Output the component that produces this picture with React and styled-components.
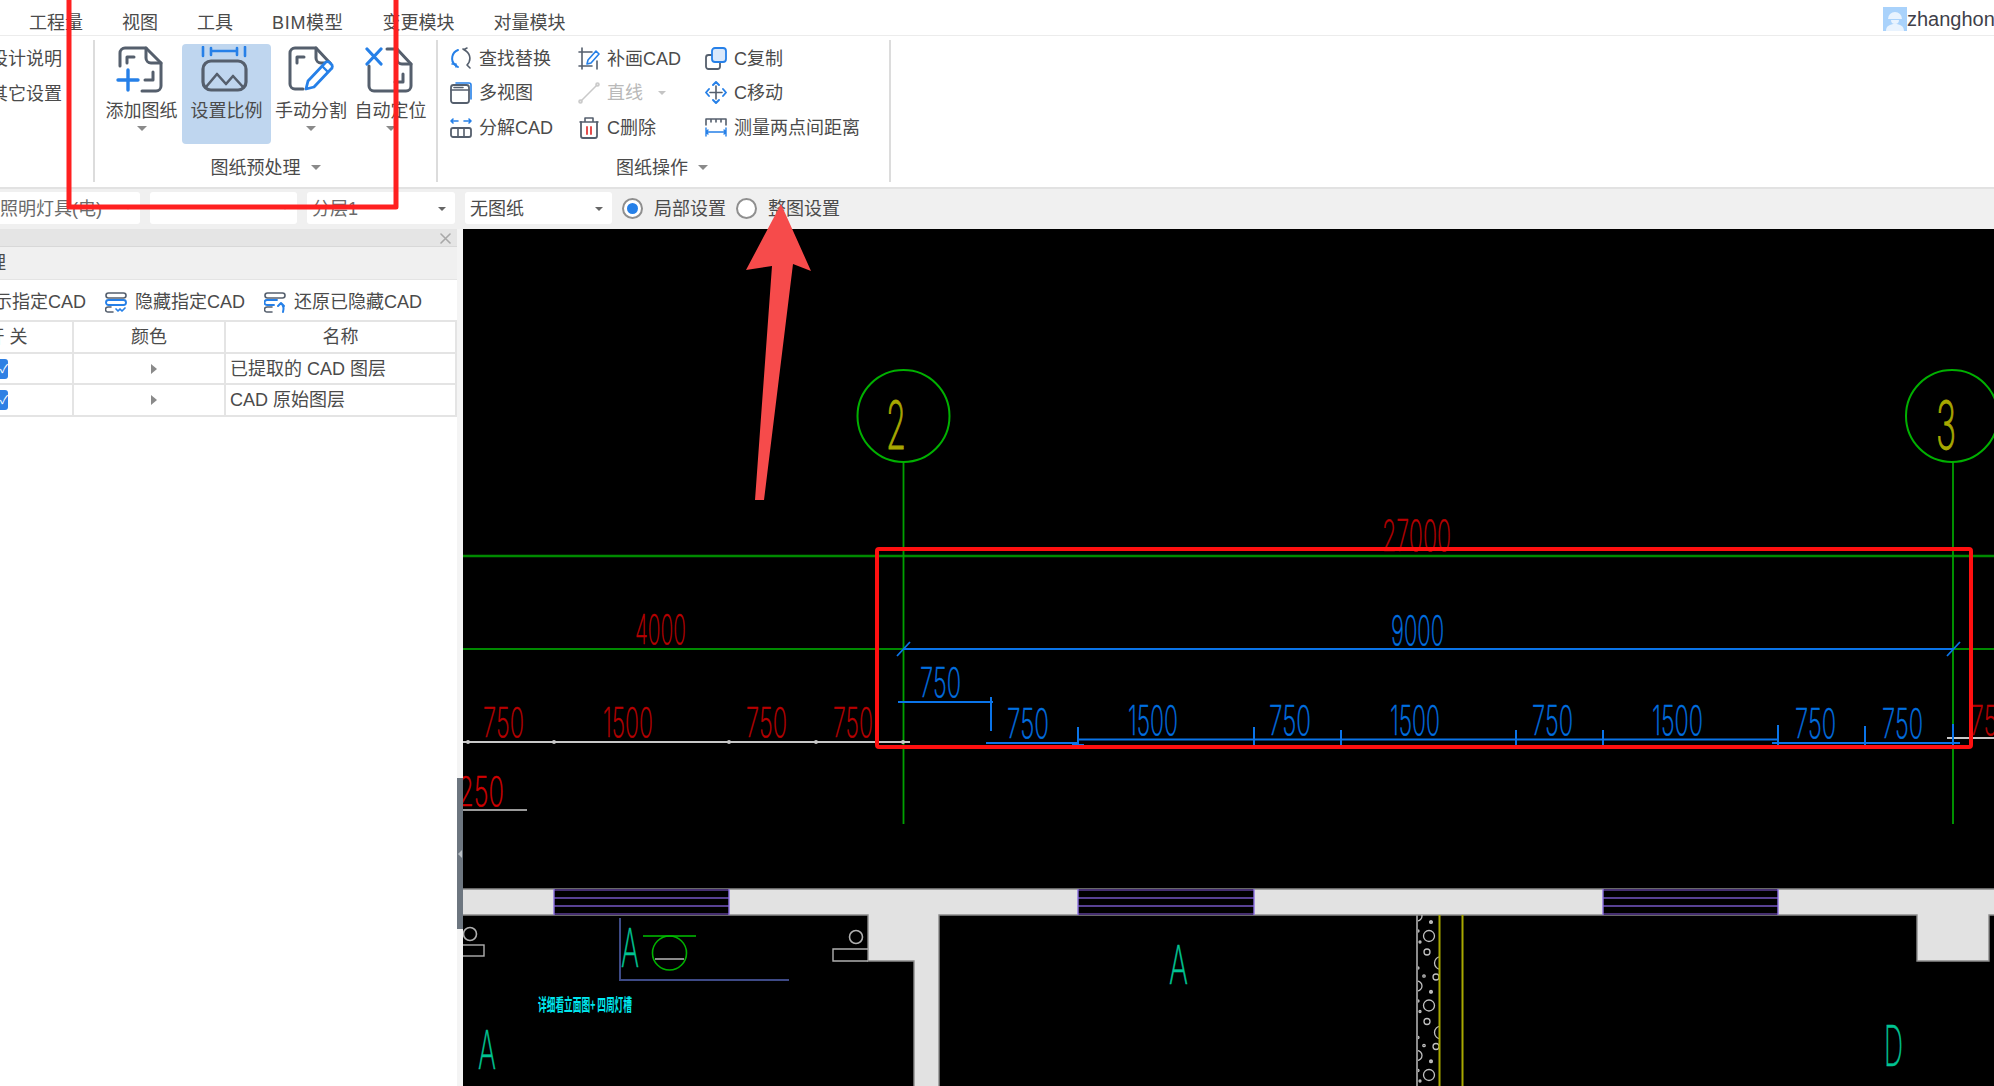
import React from "react";
import styled, { createGlobalStyle } from "styled-components";

const INK = "#555f6d";
const BLUE = "#2680e8";
const FONT = `"Liberation Sans", "Noto Sans CJK SC", sans-serif`;

const GlobalStyle = createGlobalStyle`
  html, body { margin: 0; padding: 0; background: #fff; overflow: hidden; }
  * { box-sizing: border-box; }
`;

const Page = styled.div`
  position: relative;
  width: 1994px;
  height: 1086px;
  overflow: hidden;
  display: flex;
  flex-direction: column;
  font: 18px/24px ${FONT};
  color: #4b4b4b;
  background: #fff;
`;

/* menu bar */
const MenuBar = styled.div`
  height: 36px;
  flex: none;
  display: flex;
  align-items: center;
  gap: 39px;
  padding: 10px 0 0 29px;
  border-bottom: 1px solid #ececec;
`;
const MenuItem = styled.span`
  white-space: nowrap;
  letter-spacing: ${(p) => (p.$latin ? "0.7px" : "0")};
`;
const UserBox = styled.div`
  margin-left: auto;
  display: flex;
  align-items: center;
  margin-top: -8px;
  width: 111px;
  overflow: hidden;
  font-size: 20px;
  color: #3f3f4a;
`;

/* ribbon */
const Ribbon = styled.div`
  height: 153px;
  flex: none;
  display: flex;
  align-items: stretch;
  border-bottom: 2px solid #e2e2e2;
`;
const Group = styled.div`
  width: ${(p) => p.$width}px;
  flex: none;
  margin: 4px 0 5px;
  border-right: 2px solid #dcdcdc;
  display: flex;
  flex-direction: column;
`;
const GroupBody = styled.div`
  flex: 1;
  min-height: 0;
`;
const GroupTitle = styled.div`
  height: 30px;
  flex: none;
  display: flex;
  align-items: center;
  justify-content: center;
  gap: 10px;
  padding-top: 1px;
  padding-right: ${(p) => p.$pull || 0}px;
`;
const Caret = styled.i`
  display: block;
  width: 0;
  height: 0;
  border-left: ${(p) => p.$size || 5}px solid transparent;
  border-right: ${(p) => p.$size || 5}px solid transparent;
  border-top: ${(p) => p.$size || 5}px solid ${(p) => p.$color || "#8a8a8a"};
`;
const StackedText = styled.div`
  display: flex;
  flex-direction: column;
  align-items: flex-end;
  padding: 2px 31px 0 0;
  line-height: 35px;
  white-space: nowrap;
`;
const LargeRow = styled(GroupBody)`
  display: flex;
  align-items: flex-start;
  padding: 4px 0 0 6px;
`;
const LargeButton = styled.div`
  width: ${(p) => p.$width}px;
  height: 100px;
  flex: none;
  display: flex;
  flex-direction: column;
  align-items: center;
  padding-top: 2px;
  border-radius: 4px;
  white-space: nowrap;
  background: ${(p) => (p.$active ? "#bfd6ef" : "transparent")};
`;
const LargeLabel = styled.span`
  margin: 6px 0 3px;
`;
const SmallGrid = styled(GroupBody)`
  display: grid;
  grid-template-columns: 128px 127px auto;
  grid-auto-rows: 34.5px;
  padding: 1px 0 0 12px;
`;
const SmallButton = styled.div`
  display: flex;
  align-items: center;
  gap: 7px;
  white-space: nowrap;
  color: ${(p) => (p.$disabled ? "#b9b9b9" : "inherit")};
  & > span {
    padding-top: 1px;
  }
`;
const CaretGap = styled.span`
  margin-left: 8px;
`;

/* selector bar */
const SelectBar = styled.div`
  height: 40px;
  flex: none;
  display: flex;
  align-items: center;
  gap: 10px;
  padding-bottom: 2px;
  background: #f0f0f0;
`;
const Select = styled.div`
  width: ${(p) => p.$width}px;
  height: 32px;
  flex: none;
  margin-left: ${(p) => p.$offset || 0}px;
  display: flex;
  align-items: center;
  justify-content: space-between;
  padding: 1px 9px 0 5px;
  background: #fff;
  border-radius: 3px;
  white-space: nowrap;
  color: ${(p) => (p.$muted ? "#6a6a6a" : "inherit")};
`;
const Radio = styled.span`
  width: 21px;
  height: 21px;
  flex: none;
  border-radius: 50%;
  border: 2px solid #8f8f8f;
  background: #fff;
  display: flex;
  align-items: center;
  justify-content: center;
  &::after {
    content: "";
    width: 11px;
    height: 11px;
    border-radius: 50%;
    background: ${(p) => (p.$checked ? BLUE : "transparent")};
  }
`;
const RadioLabel = styled.span`
  padding: 1px 0 0 1px;
`;

/* main area */
const Main = styled.div`
  flex: 1;
  min-height: 0;
  display: flex;
`;
const Panel = styled.div`
  width: 457px;
  flex: none;
  background: #fff;
  overflow: hidden;
`;
const PanelStrip = styled.div`
  height: 18px;
  display: flex;
  align-items: center;
  justify-content: flex-end;
  padding: 2px 6px 0 0;
  background: #e5e5e5;
  border-bottom: 1px solid #d8d8d8;
`;
const PanelHead = styled.div`
  height: 33px;
  display: flex;
  align-items: center;
  margin-left: -12px;
  background: #f0f0f0;
  border-bottom: 1px solid #e4e4e4;
`;
const PanelTools = styled.div`
  height: 40px;
  display: flex;
  align-items: center;
  padding-top: 4px;
  margin-left: -54px;
  white-space: nowrap;
`;
const PanelTool = styled.div`
  display: flex;
  align-items: center;
  gap: 8px;
  margin-right: 19px;
`;
const Table = styled.div`
  width: 517px;
  margin-left: -60px;
  display: grid;
  grid-template-columns: 130px 150px 1fr;
  grid-auto-rows: 29.5px;
  gap: 2px;
  padding: 2px;
  background: #e4e4e4;
`;
const Cell = styled.div`
  display: flex;
  align-items: center;
  justify-content: ${(p) => (p.$left ? "flex-start" : "center")};
  padding-left: ${(p) => (p.$left ? 4 : 0)}px;
  padding-right: ${(p) => p.$pullLeft || 0}px;
  padding-top: 1px;
  background: #fff;
  white-space: nowrap;
`;
const Check = styled.span`
  width: 13px;
  height: 20px;
  border-radius: 3px;
  background: #2f80e4;
  color: #fff;
  font-size: 12px;
  line-height: 20px;
  text-align: right;
  overflow: hidden;
`;
const RowArrow = styled.i`
  width: 0;
  height: 0;
  margin-left: 10px;
  border-top: 5px solid transparent;
  border-bottom: 5px solid transparent;
  border-left: 6px solid #8a8a8a;
`;
const Gutter = styled.div`
  width: 6px;
  flex: none;
  padding-top: 549px;
  background: #f4f4f4;
`;
const SplitHandle = styled.div`
  height: 151px;
  display: flex;
  align-items: center;
  background: #6d7680;
  &::before {
    content: "";
    border-top: 4px solid transparent;
    border-bottom: 4px solid transparent;
    border-right: 4px solid #b8bec4;
    margin-left: 1px;
  }
`;
const Canvas = styled.div`
  flex: 1;
  min-width: 0;
  background: #000;
  line-height: 0;
`;
const Markup = styled.svg`
  position: absolute;
  left: 0;
  top: 0;
  pointer-events: none;
`;
const Glyph = styled.svg`
  display: block;
  flex: none;
  fill: none;
  stroke-linecap: round;
  stroke-linejoin: round;
`;
const SheetGlyph = styled(Glyph)`
  margin-right: 3px;
`;

/* big ribbon icons */
const Sheet = ({ children }) => (
  <SheetGlyph width="48" height="47" viewBox="0 0 48 47">{children}</SheetGlyph>
);
const AddSheetIcon = () => (
  <Sheet>
    <g stroke={INK} strokeWidth="3">
      <path d="M4 20V7a5 5 0 0 1 5-5h21l15 15v23a5 5 0 0 1-5 5H26" />
      <path d="M30 2v10a5 5 0 0 0 5 5h10M11 17v-6h7M37 26v8h-8" />
    </g>
    <path d="M2 34h20M12 24v20" stroke={BLUE} strokeWidth="3.4" />
  </Sheet>
);
const ScaleIcon = () => (
  <Sheet>
    <path d="M2 1v9M44 1v9M10 2v7M36 2v7M10 5h26" stroke={BLUE} strokeWidth="2.6" />
    <rect x="2" y="15" width="43" height="29" rx="8" stroke={INK} strokeWidth="3.2" />
    <path d="M5 41l11-13 9 10 7-8 10 11" stroke={INK} strokeWidth="2.6" />
  </Sheet>
);
const SplitIcon = () => (
  <Sheet>
    <g stroke={INK} strokeWidth="3">
      <path d="M30 2H9a5 5 0 0 0-5 5v31a5 5 0 0 0 5 5h8M30 2l14 15v4" />
      <path d="M30 2v10a5 5 0 0 0 5 5h9M11 17v-6h7" />
    </g>
    <path d="M20 43l2-8 17-18a3 3 0 0 1 5 0l1 1a3 3 0 0 1 0 5L28 41z" fill="#fff" stroke={BLUE} strokeWidth="2.8" />
    <path d="M36 20l6 6" stroke={BLUE} strokeWidth="2.4" />
  </Sheet>
);
const LocateIcon = () => (
  <Sheet>
    <g stroke={INK} strokeWidth="3">
      <path d="M22 3h10l14 15v22a5 5 0 0 1-5 5H9a5 5 0 0 1-5-5V20" />
      <path d="M32 3v10a5 5 0 0 0 5 5h9M38 28v8h-8" />
    </g>
    <path d="M2 3l14 15M16 3L2 18" stroke={BLUE} strokeWidth="3.2" />
  </Sheet>
);

/* small ribbon icons */
const Small = ({ children }) => (
  <Glyph width="22" height="23" viewBox="0 0 22 23" strokeWidth="1.6">{children}</Glyph>
);
const FindIcon = () => (
  <Small>
    <path d="M8 3a9 9 0 0 0-3 15l3 2" stroke={BLUE} strokeWidth="2" />
    <path d="M13 2l3 2a9 9 0 0 1 1 14l3 3M15 2l2-1" stroke={INK} />
    <path d="M2 17h4v3" stroke={BLUE} strokeWidth="1.6" />
  </Small>
);
const ViewsIcon = () => (
  <Small>
    <path d="M6 2h13a2 2 0 0 1 2 2v14" stroke={BLUE} />
    <rect x="1" y="4" width="18" height="18" rx="2.5" stroke={INK} strokeWidth="1.8" />
    <path d="M1 9h18M4 6.5h9" stroke={INK} />
  </Small>
);
const ExplodeIcon = () => (
  <Small>
    <path d="M1 5h7M3 3L1 5l2 2M21 5h-7M19 3l2 2-2 2" stroke={BLUE} />
    <rect x="1" y="12" width="20" height="9" rx="2" stroke={INK} strokeWidth="1.8" />
    <path d="M8 12v9M14 12v9" stroke={INK} />
  </Small>
);
const PatchIcon = () => (
  <Small>
    <path d="M4 1v21M1 5h13M1 19h13M19 14v8" stroke={INK} />
    <path d="M9 17l1-4 8-9 3 3-8 9z" stroke={BLUE} />
  </Small>
);
const LineIcon = () => (
  <Small>
    <path d="M3 20L19 4" stroke="#c9c9c9" />
    <circle cx="2.5" cy="20.5" r="1.5" stroke="#c9c9c9" />
    <circle cx="19.5" cy="3.5" r="1.5" stroke="#c9c9c9" />
  </Small>
);
const TrashIcon = () => (
  <Small>
    <path d="M2 6h18M7 5V2h8v3" stroke={INK} />
    <path d="M3 6v14a2 2 0 0 0 2 2h12a2 2 0 0 0 2-2V6" stroke={INK} strokeWidth="1.8" />
    <path d="M9 11v7M13 11v7" stroke="#e23b3b" strokeWidth="1.8" />
  </Small>
);
const CopyIcon = () => (
  <Small>
    <rect x="1" y="8" width="14" height="14" rx="2.5" stroke={INK} strokeWidth="1.8" />
    <rect x="7" y="1" width="14" height="14" rx="3" fill="#dbe9fb" stroke={BLUE} strokeWidth="1.8" />
  </Small>
);
const MoveIcon = () => (
  <Small>
    <path d="M11 5v13M5 11.5h12" stroke={INK} />
    <path d="M8 4l3-3 3 3M8 19l3 3 3-3M4 8l-3 3.5L4 15M18 8l3 3.5-3 3.5" stroke={BLUE} strokeWidth="1.9" />
  </Small>
);
const MeasureIcon = () => (
  <Small>
    <path d="M1 9V3h20v6M6 3v3M11 3v3M16 3v3" stroke={INK} />
    <path d="M1 16h20M3 14l-2 2 2 2M19 14l2 2-2 2M1 12v8M21 12v8" stroke={BLUE} strokeWidth="1.4" />
  </Small>
);
const HideIcon = () => (
  <Small>
    <rect x="1" y="2" width="20" height="5" rx="2.5" stroke={INK} />
    <rect x="1" y="9" width="20" height="5" rx="2.5" stroke={BLUE} strokeWidth="1.9" />
    <path d="M6 16H3a2 2 0 0 0 0 5h5" stroke={INK} />
    <path d="M11 18l2 2 2-2 2 2 3-3" stroke={BLUE} strokeWidth="1.7" />
  </Small>
);
const RestoreIcon = () => (
  <Small>
    <rect x="1" y="2" width="20" height="5" rx="2.5" stroke={INK} />
    <path d="M13 9H3a2.5 2.5 0 0 0 0 5h7" stroke={BLUE} strokeWidth="1.9" />
    <path d="M8 16H3a2 2 0 0 0 0 5h5" stroke={INK} />
    <path d="M14 15l3-3 3 3M17 12c3 3 3 6 2 9" stroke={BLUE} strokeWidth="2" />
  </Small>
);
const CloseIcon = () => (
  <Glyph width="11" height="11" viewBox="0 0 11 11">
    <path d="M1 1l9 9M10 1l-9 9" stroke="#a8a8a8" strokeWidth="1.6" />
  </Glyph>
);
const Avatar = () => (
  <Glyph width="24" height="24" viewBox="0 0 24 24">
    <rect width="24" height="24" fill="#a9d2fb" />
    <path d="M5 12a7 7 0 0 1 14 0z" fill="#e9f3fe" />
    <path d="M8 13h8a4 4 0 0 1-8 0zM3 24c0-5 4-7 9-7s9 2 9 7z" fill="#e9f3fe" />
  </Glyph>
);

/* CAD drawing */
const RED = "#b80000";
const DIM = "#0070e0";
const TEAL = "#00c493";
const YELLOW = "#a8a800";
const GREEN = "#008a00";

const dims = [
  // [text, x from, x to, baseline, colour, font size]
  ["750", 483, 524, 737, RED, 41],
  ["1500", 603, 653, 737, RED, 41],
  ["750", 746, 787, 737, RED, 41],
  ["750", 833, 873, 737, RED, 41],
  ["4000", 635, 686, 644, RED, 41],
  ["27000", 1382, 1451, 551, RED, 43],
  ["250", 458, 504, 806, "#d00000", 41],
  ["75", 1970, 1998, 735, RED, 41],
  ["750", 920, 961, 697, DIM, 41],
  ["9000", 1391, 1444, 645, DIM, 41],
  ["750", 1007, 1049, 738, DIM, 41],
  ["1500", 1128, 1178, 735, DIM, 41],
  ["750", 1269, 1311, 735, DIM, 41],
  ["1500", 1390, 1440, 735, DIM, 41],
  ["750", 1532, 1573, 735, DIM, 41],
  ["1500", 1652, 1703, 735, DIM, 41],
  ["750", 1795, 1836, 738, DIM, 41],
  ["750", 1882, 1923, 738, DIM, 41],
  ["A", 1169, 1188, 984, TEAL, 54],
  ["A", 621, 639, 967, TEAL, 54],
  ["A", 478, 496, 1069, TEAL, 54],
  ["D", 1884, 1903, 1066, TEAL, 56],
];

const CadText = styled.text`
  font-family: "Inter", "Liberation Sans", sans-serif;
  font-weight: 200;
  font-size: ${(p) => p.$size}px;
  stroke: ${(p) => p.fill};
  stroke-width: 0.5px;
`;
const AxisLabel = styled(CadText)`
  stroke-width: 1.2px;
`;
const CadNote = styled.text`
  font-family: "Noto Sans CJK SC", sans-serif;
  font-size: 17px;
  font-weight: 700;
`;

// one repeat of the fill pattern in the column, offset by row below
const hatchCell = [
  [1429, 936, 5.5], [1427, 952, 3], [1441, 963, 6.5], [1436, 977, 3], [1417, 986, 5],
  [1431, 922, 1.2], [1420, 942, 1], [1424, 976, 1.2], [1431, 992, 1.2], [1418, 968, 1], [1418, 1001, 1],
];

const Window = ({ x, w }) => (
  <g>
    <rect x={x} y="889" width={w} height="26" fill="#000" />
    {[890, 898, 906, 914].map((y, i) => (
      <line key={y} x1={x} x2={x + w} y1={y} y2={y} stroke={i % 3 === 0 ? "#5c3f96" : "#7657c4"} strokeWidth="1.6" />
    ))}
    <line x1={x} x2={x} y1="889" y2="915" stroke="#8a6fe0" strokeWidth="1.4" />
    <line x1={x + w} x2={x + w} y1="889" y2="915" stroke="#8a6fe0" strokeWidth="1.4" />
  </g>
);

const Drawing = () => (
  <svg width="1531" height="857" viewBox="463 229 1531 857">
    <defs>
      <clipPath id="column">
        <rect x="1417" y="915" width="23" height="171" />
      </clipPath>
    </defs>
    {/* walls */}
    <path
      d="M455 889H2000V915H1989V961H1917V915H939V1090H914V961H868V915H455Z"
      fill="#e2e2e2"
      stroke="#8c8c8c"
      strokeWidth="1.4"
    />
    <Window x={554} w={175} />
    <Window x={1078} w={176} />
    <Window x={1603} w={175} />

    {/* axis lines */}
    <line x1="463" x2="1994" y1="556" y2="556" stroke={GREEN} strokeWidth="2.4" />
    <line x1="463" x2="1994" y1="649" y2="649" stroke={GREEN} strokeWidth="2" />
    <line x1="903.5" x2="903.5" y1="462" y2="824" stroke="#00a000" strokeWidth="1.8" />
    <line x1="1953" x2="1953" y1="462" y2="824" stroke="#00a000" strokeWidth="1.8" />
    <circle cx="903.5" cy="416" r="46" fill="none" stroke="#00b000" strokeWidth="2" />
    <circle cx="1952" cy="416" r="46" fill="none" stroke="#00b000" strokeWidth="2" />
    <AxisLabel x="886" y="449" textLength="20" lengthAdjust="spacingAndGlyphs" fill={YELLOW} $size={67}>2</AxisLabel>
    <AxisLabel x="1936" y="449" textLength="20" lengthAdjust="spacingAndGlyphs" fill={YELLOW} $size={67}>3</AxisLabel>

    {/* dimension lines */}
    <path d="M463 742H910M1947 738H1994" stroke="#c8c8c8" strokeWidth="2" />
    <path d="M463 810H527" stroke="#9a9a9a" strokeWidth="2" />
    {[468, 554, 729, 816, 903].map((x) => (
      <circle key={x} cx={x} cy="742" r="2" fill="#c8c8c8" />
    ))}
    <path
      d="M903 649H1953M898 702H993M991 697V731M986 743H1078M1078 739.5H1778M1778 743H1960M1078 727V747M1254 727V747M1341 730V747M1516 730V747M1603 730V747M1778 725V747M1865 726V747M1953 724V747M1072 745H1084M1772 743H1784"
      stroke="#0a74e8"
      strokeWidth="2"
      fill="none"
    />
    <path d="M897 656L910 642M1947 656L1960 642" stroke="#0a74e8" strokeWidth="1.8" />

    {dims.map(([t, a, b, y, c, size], i) => (
      <CadText key={i} x={a} y={y} textLength={b - a} lengthAdjust="spacingAndGlyphs" fill={c} $size={size}>
        {t}
      </CadText>
    ))}

    {/* room details */}
    <circle cx="470" cy="934" r="6.5" fill="none" stroke="#b0b0b0" strokeWidth="1.6" />
    <rect x="455" y="945" width="29" height="11" fill="none" stroke="#b0b0b0" strokeWidth="1.4" />
    <circle cx="856" cy="937" r="6.5" fill="none" stroke="#b0b0b0" strokeWidth="1.6" />
    <path d="M868 949H833V961H868" fill="none" stroke="#b0b0b0" strokeWidth="1.4" />
    <path d="M620 918V980H789" fill="none" stroke="#3e4a86" strokeWidth="2" />
    <circle cx="669.5" cy="953" r="17" fill="none" stroke="#00b000" strokeWidth="1.6" />
    <path d="M643 936H696" stroke="#00c000" strokeWidth="1.6" />
    <path d="M655 959H684" stroke="#8a8a8a" strokeWidth="2" />
    <CadNote x="538" y="1011" textLength="94" lengthAdjust="spacingAndGlyphs" fill="#00e8f0">
      详细看立面图+ 四周灯槽
    </CadNote>

    {/* column hatch */}
    <g clipPath="url(#column)">
      {[-70, 0, 69.5, 139].map((dy) =>
        hatchCell.map(([cx, cy, r], i) => (
          <circle key={`${dy}-${i}`} cx={cx} cy={cy + dy} r={r} fill="none" stroke="#c0c0c0" strokeWidth="1.3" />
        ))
      )}
    </g>
    <path d="M1417 915V1086" stroke="#8c8c8c" strokeWidth="2" />
    <path d="M1439.5 915V1086M1462.5 915V1086" stroke="#a8a800" strokeWidth="2" />
  </svg>
);

const largeButtons = [
  [81, <AddSheetIcon />, "添加图纸", true],
  [89, <ScaleIcon />, "设置比例", false, true],
  [80, <SplitIcon />, "手动分割", true],
  [79, <LocateIcon />, "自动定位", true],
];

const smallButtons = [
  [<FindIcon />, "查找替换"],
  [<PatchIcon />, "补画CAD"],
  [<CopyIcon />, "C复制"],
  [<ViewsIcon />, "多视图"],
  [<LineIcon />, "直线", true],
  [<MoveIcon />, "C移动"],
  [<ExplodeIcon />, "分解CAD"],
  [<TrashIcon />, "C删除"],
  [<MeasureIcon />, "测量两点间距离"],
];

const rows = ["已提取的 CAD 图层", "CAD 原始图层"];

export default function App() {
  return (
    <Page>
      <GlobalStyle />
      <MenuBar>
        {["工程量", "视图", "工具", "BIM模型", "变更模块", "对量模块"].map((m) => (
          <MenuItem key={m} $latin={m.startsWith("BIM")}>{m}</MenuItem>
        ))}
        <UserBox>
          <Avatar />
          zhanghong
        </UserBox>
      </MenuBar>

      <Ribbon>
        <Group $width={95}>
          <StackedText>
            <span>设计说明</span>
            <span>其它设置</span>
          </StackedText>
        </Group>
        <Group $width={343}>
          <LargeRow>
            {largeButtons.map(([w, icon, label, more, active]) => (
              <LargeButton key={label} $width={w} $active={active}>
                {icon}
                <LargeLabel>{label}</LargeLabel>
                {more && <Caret $color="#8a8a8a" />}
              </LargeButton>
            ))}
          </LargeRow>
          <GroupTitle>
            图纸预处理
            <Caret />
          </GroupTitle>
        </Group>
        <Group $width={453}>
          <SmallGrid>
            {smallButtons.map(([icon, label, disabled]) => (
              <SmallButton key={label} $disabled={disabled}>
                {icon}
                <span>{label}</span>
                {disabled && (
                  <CaretGap>
                    <Caret $size={4} $color="#c4c4c4" />
                  </CaretGap>
                )}
              </SmallButton>
            ))}
          </SmallGrid>
          <GroupTitle $pull={3}>
            图纸操作
            <Caret />
          </GroupTitle>
        </Group>
      </Ribbon>

      <SelectBar>
        <Select $width={160} $offset={-20} $muted>
          <span>&nbsp;&nbsp;&nbsp;照明灯具(电)</span>
          <Caret $size={3} $color="#d0d0d0" />
        </Select>
        <Select $width={147}>
          <span />
          <Caret $size={3} $color="#d8d8d8" />
        </Select>
        <Select $width={148} $muted>
          分层1
          <Caret $size={4} $color="#666" />
        </Select>
        <Select $width={147}>
          无图纸
          <Caret $size={4} $color="#666" />
        </Select>
        <Radio $checked />
        <RadioLabel>局部设置</RadioLabel>
        <Radio />
        <RadioLabel>整图设置</RadioLabel>
      </SelectBar>

      <Main>
        <Panel>
          <PanelStrip>
            <CloseIcon />
          </PanelStrip>
          <PanelHead>理</PanelHead>
          <PanelTools>
            <PanelTool>
              <HideIcon />
              显示指定CAD
            </PanelTool>
            <PanelTool>
              <HideIcon />
              隐藏指定CAD
            </PanelTool>
            <PanelTool>
              <RestoreIcon />
              还原已隐藏CAD
            </PanelTool>
          </PanelTools>
          <Table>
            <Cell>开 关</Cell>
            <Cell>颜色</Cell>
            <Cell>名称</Cell>
            {rows.map((name) => (
              <React.Fragment key={name}>
                <Cell $pullLeft={11}>
                  <Check>✓</Check>
                </Cell>
                <Cell>
                  <RowArrow />
                </Cell>
                <Cell $left>{name}</Cell>
              </React.Fragment>
            ))}
          </Table>
        </Panel>
        <Gutter>
          <SplitHandle />
        </Gutter>
        <Canvas>
          <Drawing />
        </Canvas>
      </Main>

      {/* red review marks pasted over the screenshot */}
      <Markup width="1994" height="1086" viewBox="0 0 1994 1086" fill="none">
        <path d="M69 -10V207H396V-10" stroke="#ff2020" strokeWidth="5" strokeLinejoin="round" />
        <rect x="877" y="549" width="1094" height="198" rx="2" stroke="#ff1010" strokeWidth="4" />
        <path d="M781 204L811 271L793 264L764 500L755 500L772 266L746 270Z" fill="#f64b4b" />
      </Markup>
    </Page>
  );
}
